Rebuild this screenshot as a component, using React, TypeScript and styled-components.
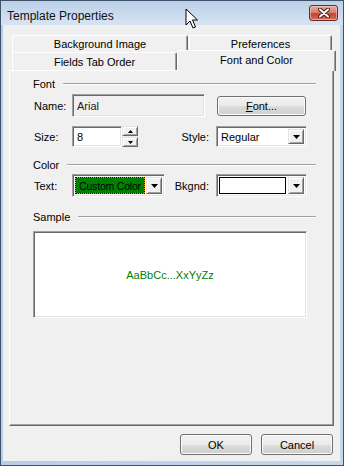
import React from 'react';
import styled, { createGlobalStyle } from 'styled-components';

const GlobalStyle = createGlobalStyle`
  html, body {
    margin: 0;
    padding: 0;
    background: #ffffff;
  }
  body {
    font-family: "Liberation Sans", Arial, sans-serif;
    font-size: 11px;
    color: #000;
  }
  * {
    box-sizing: border-box;
  }
`;

// Вікно з рамкою
const Window = styled.div`
  position: relative;
  width: 344px;
  height: 466px;
  display: flex;
  flex-direction: column;
  border: 1px solid #3f5168;
  background: #bcd3ea;
`;

const TitleBar = styled.div`
  height: 24px;
  display: flex;
  align-items: flex-start;
  padding-left: 6px;
  padding-right: 5px;
  background: linear-gradient(#bad0e8, #cfdef0 70%, #d6e3f2);
`;

const TitleText = styled.div`
  font-size: 12px;
  line-height: 12px;
  margin-top: 9px;
  color: #111;
`;

const CloseButton = styled.div`
  margin-left: auto;
  margin-top: 4px;
  width: 29px;
  height: 16px;
  border: 1px solid #6b2b24;
  border-radius: 3px;
  background: linear-gradient(#e6a698 0%, #d9836f 45%, #c5452f 55%, #d0705a 100%);
  box-shadow: inset 0 0 0 1px rgba(255, 220, 210, 0.5);
  display: flex;
  align-items: center;
  justify-content: center;
`;

const Frame = styled.div`
  flex: 1;
  display: flex;
  padding: 0 3px 4px 2px;
  background: linear-gradient(90deg, #b6cee8, #c4d8ee);
`;

const Client = styled.div`
  flex: 1;
  display: flex;
  flex-direction: column;
  background: #f0f0f0;
  padding-top: 10px;
`;

// Вкладки
const TabRow = styled.div<{ $height: number }>`
  height: ${p => p.$height}px;
  display: flex;
  align-items: flex-end;
  gap: 1px;
  padding-left: 9px;
`;

const Tab = styled.div<{ $width: number; $height: number; $selected?: boolean }>`
  position: relative;
  z-index: ${p => (p.$selected ? 2 : 1)};
  width: ${p => p.$width}px;
  height: ${p => p.$height}px;
  margin-bottom: ${p => (p.$selected ? '-1px' : '0')};
  margin-left: ${p => (p.$selected ? '-1px' : '0')};
  display: flex;
  align-items: center;
  justify-content: center;
  padding-bottom: ${p => (p.$selected ? '2px' : '0')};
  background: #f0f0f0;
  border-top: 1px solid #ffffff;
  border-left: 1px solid #ffffff;
  border-right: 1px solid #696969;
  border-radius: 2px 2px 0 0;
  box-shadow: inset -1px 0 0 #a0a0a0;
  white-space: nowrap;
`;

const Panel = styled.div`
  height: 356px;
  margin: 0 6px;
  display: flex;
  flex-direction: column;
  padding: 0 17px 0 23px;
  border: 1px solid;
  border-color: #ffffff #696969 #696969 #ffffff;
  box-shadow: inset -1px -1px 0 #a0a0a0;
`;

const GroupHeader = styled.div<{ $top: number }>`
  margin-top: ${p => p.$top}px;
  height: 14px;
  display: flex;
  align-items: center;
  gap: 8px;
`;

const GroupLine = styled.div`
  flex: 1;
  border-top: 1px solid #a0a0a0;
  border-bottom: 1px solid #ffffff;
`;

const Row = styled.div<{ $top: number; $height: number }>`
  margin-top: ${p => p.$top}px;
  height: ${p => p.$height}px;
  width: 274px;
  display: flex;
  align-items: center;
`;

const Label = styled.div`
  width: 39px;
  padding-left: 1px;
`;

const SideLabel = styled.div`
  margin-left: auto;
  margin-right: 7px;
`;

const Sunken = styled.div<{ $width: number; $height: number; $bg?: string }>`
  width: ${p => p.$width}px;
  height: ${p => p.$height}px;
  background: ${p => p.$bg || '#ffffff'};
  border: 1px solid;
  border-color: #a0a0a0 #ffffff #ffffff #a0a0a0;
  box-shadow: inset 1px 1px 0 #696969, inset -1px -1px 0 #e3e3e3;
  display: flex;
  align-items: center;
  padding: 2px;
`;

const FieldText = styled.span<{ $color?: string }>`
  padding-left: 2px;
  color: ${p => p.$color || '#000'};
`;

const Raised = styled.div<{ $height?: number }>`
  width: 16px;
  height: ${p => (p.$height ? `${p.$height}px` : '100%')};
  background: #f0f0f0;
  border: 1px solid;
  border-color: #e3e3e3 #696969 #696969 #e3e3e3;
  box-shadow: inset 1px 1px 0 #ffffff, inset -1px -1px 0 #a0a0a0;
  display: flex;
  align-items: center;
  justify-content: center;
  flex-shrink: 0;
`;

const ComboValue = styled.div`
  flex: 1;
  height: 100%;
  display: flex;
  align-items: center;
`;

const ColorSwatch = styled.div`
  flex: 1;
  height: 100%;
  margin-right: 1px;
  display: flex;
  align-items: center;
  justify-content: center;
  border: 1px dotted #000;
  background: linear-gradient(#008000, #008000) padding-box, #e0a800;
  font-size: 10.5px;
  letter-spacing: -0.2px;
  white-space: nowrap;
  overflow: hidden;
`;

const WhiteSwatch = styled.div`
  flex: 1;
  height: 100%;
  margin-right: 2px;
  border: 1px solid #000;
  background: #ffffff;
`;

const SpinBox = styled.div`
  display: flex;
  align-items: center;
`;

const SpinButtons = styled.div`
  display: flex;
  flex-direction: column;
  gap: 1px;
`;

const PushButton = styled.div<{ $width: number; $height: number }>`
  width: ${p => p.$width}px;
  height: ${p => p.$height}px;
  border: 1px solid #707070;
  border-radius: 3px;
  background: linear-gradient(#f2f2f2 0%, #ebebeb 50%, #dddddd 50%, #cfcfcf 100%);
  box-shadow: inset 0 0 0 1px #fbfbfb;
  display: flex;
  align-items: center;
  justify-content: center;
`;

const SampleText = styled.span`
  width: 100%;
  text-align: center;
  color: #008000;
`;

const ButtonRow = styled.div`
  margin-top: 8px;
  display: flex;
  justify-content: flex-end;
  gap: 9px;
  padding-right: 7px;
`;

const Cursor = styled.svg`
  position: absolute;
  left: 184px;
  top: 7px;
`;

const DownArrow: React.FC<{ small?: boolean }> = ({ small }) =>
  small ? (
    <svg width="5" height="3" viewBox="0 0 5 3">
      <polygon points="0,0 5,0 2.5,3" fill="#000" />
    </svg>
  ) : (
    <svg width="7" height="4" viewBox="0 0 7 4">
      <polygon points="0,0 7,0 3.5,4" fill="#000" />
    </svg>
  );

const UpArrow = () => (
  <svg width="5" height="3" viewBox="0 0 5 3">
    <polygon points="0,3 5,3 2.5,0" fill="#000" />
  </svg>
);

const App: React.FC = () => {
  return (
    <>
      <GlobalStyle />
      <Window>
        <TitleBar>
          <TitleText>Template Properties</TitleText>
          <CloseButton>
            <svg width="12" height="10" viewBox="0 0 12 10">
              <path d="M2 1.5 L10 8.5 M10 1.5 L2 8.5" stroke="#4b1b15" strokeWidth="4" strokeLinecap="round" />
              <path d="M2 1.5 L10 8.5 M10 1.5 L2 8.5" stroke="#ffffff" strokeWidth="2" strokeLinecap="round" />
            </svg>
          </CloseButton>
        </TitleBar>

        <Frame>
          <Client>
            <TabRow $height={17}>
              <Tab $width={176} $height={17}>Background Image</Tab>
              <Tab $width={143} $height={17}>Preferences</Tab>
            </TabRow>
            <TabRow $height={18}>
              <Tab $width={165} $height={18}>Fields Tab Order</Tab>
              <Tab $width={159} $height={21} $selected>Font and Color</Tab>
            </TabRow>

            <Panel>
              <GroupHeader $top={6}>
                <span>Font</span>
                <GroupLine />
              </GroupHeader>
              <Row $top={3} $height={23}>
                <Label>Name:</Label>
                <Sunken $width={133} $height={23} $bg="#f0f0f0">
                  <FieldText $color="#222">Arial</FieldText>
                </Sunken>
                <PushButton $width={89} $height={20} style={{ marginLeft: 'auto', marginRight: 1 }}>
                  <span>
                    <u>F</u>ont...
                  </span>
                </PushButton>
              </Row>

              <Row $top={9} $height={21}>
                <Label>Size:</Label>
                <SpinBox>
                  <Sunken $width={50} $height={21}>
                    <FieldText>8</FieldText>
                  </Sunken>
                  <SpinButtons>
                    <Raised $height={10}>
                      <UpArrow />
                    </Raised>
                    <Raised $height={10}>
                      <DownArrow small />
                    </Raised>
                  </SpinButtons>
                </SpinBox>
                <SideLabel>Style:</SideLabel>
                <Sunken $width={91} $height={21}>
                  <ComboValue>
                    <FieldText>Regular</FieldText>
                  </ComboValue>
                  <Raised>
                    <DownArrow />
                  </Raised>
                </Sunken>
              </Row>

              <GroupHeader $top={11}>
                <span>Color</span>
                <GroupLine />
              </GroupHeader>
              <Row $top={2} $height={23}>
                <Label>Text:</Label>
                <Sunken $width={93} $height={23}>
                  <ColorSwatch>Custom Color</ColorSwatch>
                  <Raised>
                    <DownArrow />
                  </Raised>
                </Sunken>
                <SideLabel>Bkgnd:</SideLabel>
                <Sunken $width={91} $height={23}>
                  <WhiteSwatch />
                  <Raised>
                    <DownArrow />
                  </Raised>
                </Sunken>
              </Row>

              <GroupHeader $top={13}>
                <span>Sample</span>
                <GroupLine />
              </GroupHeader>
              <Row $top={7} $height={87}>
                <Sunken $width={274} $height={87}>
                  <SampleText>AaBbCc...XxYyZz</SampleText>
                </Sunken>
              </Row>
            </Panel>

            <ButtonRow>
              <PushButton $width={72} $height={21}>OK</PushButton>
              <PushButton $width={72} $height={21}>Cancel</PushButton>
            </ButtonRow>
          </Client>
        </Frame>

        <Cursor width="13" height="21" viewBox="0 0 13 21">
          <path
            d="M1 1 L1 17 L5 13 L8 20 L10.5 19 L7.5 12 L12.5 12 Z"
            fill="#ffffff"
            stroke="#000000"
            strokeWidth="1"
            strokeLinejoin="miter"
          />
        </Cursor>
      </Window>
    </>
  );
};

export default App;
